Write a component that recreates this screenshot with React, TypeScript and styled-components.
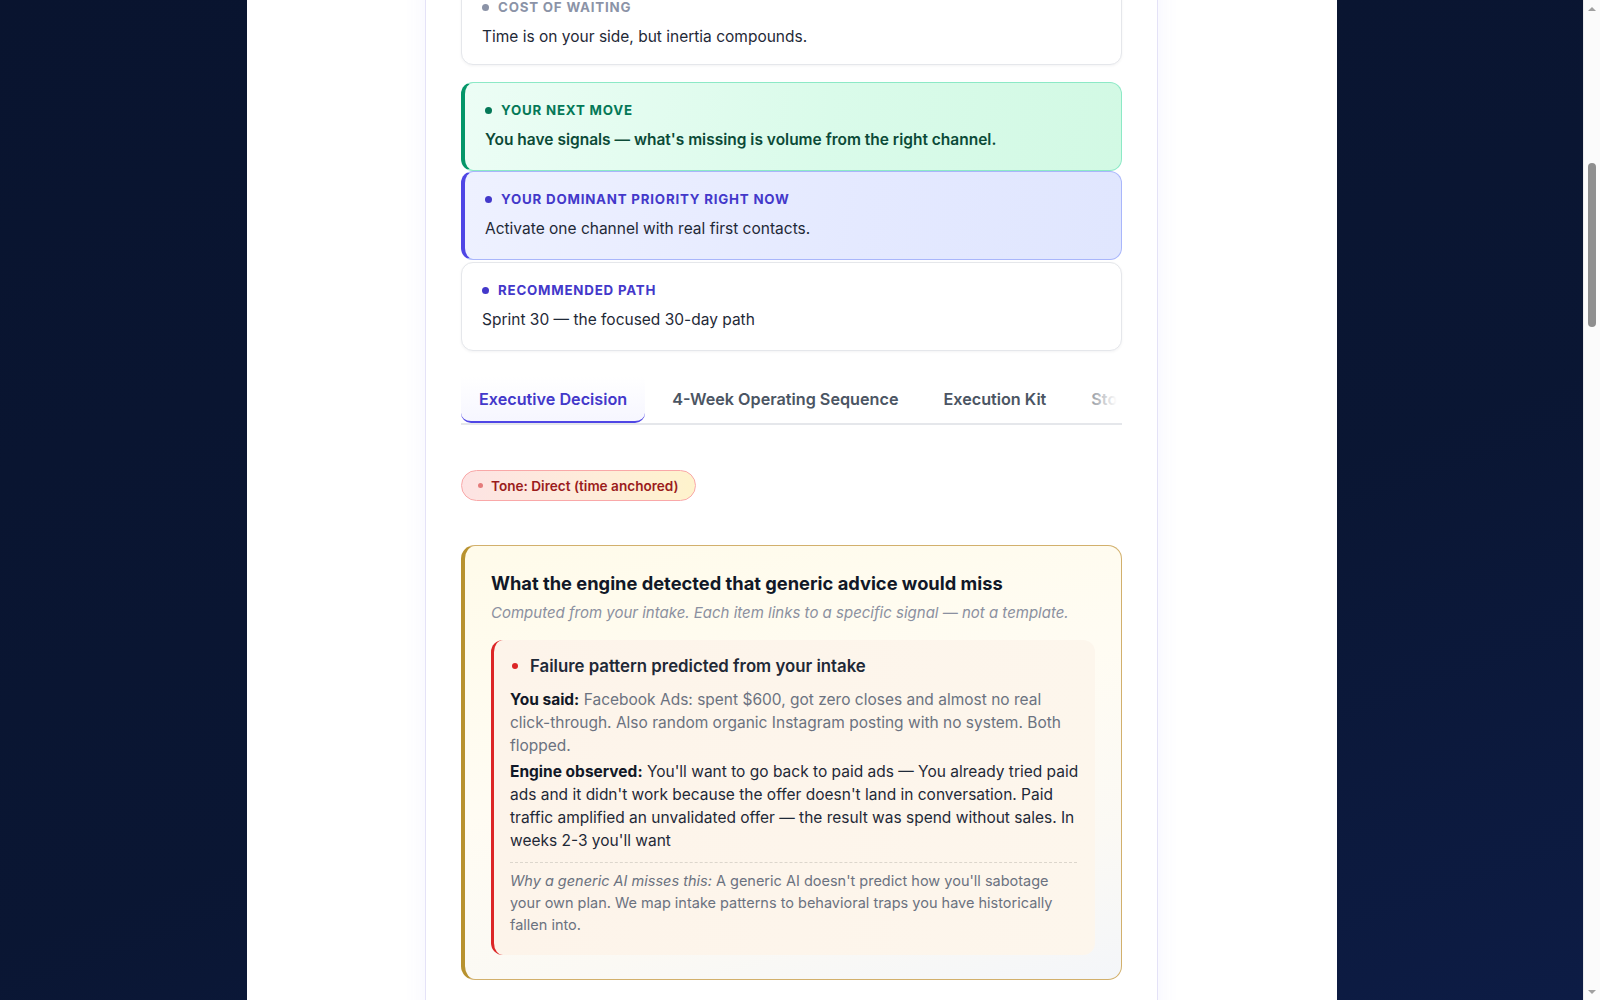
import React, { useLayoutEffect, useRef } from "react";
import styled, { createGlobalStyle, css } from "styled-components";

const GlobalStyle = createGlobalStyle`
    html, body {
        margin: 0;
        padding: 0;
    }
    body {
        padding-right: 17px;
        background: linear-gradient(160deg, #09142f 0%, #0a1633 60%, #0d1c45 100%) fixed;
        font-family: Inter, "Noto Sans", "Liberation Sans", sans-serif;
        color: #1f2937;
        -webkit-font-smoothing: antialiased;
    }
    * {
        box-sizing: border-box;
    }
`;

// window scrollbar, drawn because the headless window hides its own
const StyledScrollRail = styled.aside`
    position: fixed;
    top: 0;
    right: 0;
    bottom: 0;
    width: 17px;
    display: flex;
    flex-direction: column;
    align-items: center;
    background: #fbfbfb;
    border-left: 1px solid #ececec;
`;

const StyledRailArrow = styled.div<{ $down?: boolean }>`
    height: 17px;
    width: 100%;
    display: flex;
    align-items: center;
    justify-content: center;

    &::before {
        content: "";
        border-left: 4px solid transparent;
        border-right: 4px solid transparent;
        ${(p) => (p.$down ? "border-top: 4px solid #a0a0a0;" : "border-bottom: 4px solid #a0a0a0;")}
    }
`;

const StyledRailTrack = styled.div`
    flex: 1;
    width: 100%;
    display: flex;
    justify-content: center;
`;

const StyledRailThumb = styled.div`
    width: 8px;
    height: 164px;
    margin-top: 146px;
    border-radius: 5px;
    background: #8f8f8f;
`;

const StyledPage = styled.div`
    width: 1090px;
    margin: 0 auto;
    background: #ffffff;
    min-height: 6000px;
`;

const StyledPanel = styled.main`
    width: 733px;
    margin: 0 auto;
    min-height: 6000px;
    padding: 0 35px;
    border-left: 1px solid #e4e2f7;
    border-right: 1px solid #e4e2f7;
    box-shadow: 0 0 22px rgba(99, 102, 241, 0.07);
    background: #ffffff;
`;

// the report sections that sit above the visible area
const StyledEarlierSections = styled.section`
    height: 920px;
`;

type Tone = "plain" | "green" | "indigo";

const toneCard = {
    plain: css`
        background: #ffffff;
        border: 1px solid #e5e7eb;
        box-shadow: 0 1px 3px rgba(15, 23, 42, 0.05);
    `,
    green: css`
        background: linear-gradient(100deg, #ecfdf5 0%, #dafbea 55%, #d2f9e4 100%);
        border: 1px solid #8ce9c6;
        border-left: 4px solid #059669;
        padding-left: 20px;
    `,
    indigo: css`
        background: linear-gradient(100deg, #eef1ff 0%, #e4e9ff 60%, #e0e6fe 100%);
        border: 1px solid #a9b6fb;
        border-left: 4px solid #4f46e5;
        padding-left: 20px;
    `,
};

const StyledSignalCard = styled.div<{ $tone: Tone; $space: number; $tight?: boolean }>`
    border-radius: 12px;
    padding: 19px 20px ${(p) => (p.$tight ? 16 : 19)}px 20px;
    margin-top: ${(p) => p.$space}px;
    ${(p) => toneCard[p.$tone]}
`;

const StyledSignalLabel = styled.div<{ $color: string }>`
    display: flex;
    align-items: center;
    gap: 9px;
    height: 16px;
    font-size: 13.3px;
    font-weight: 700;
    letter-spacing: 0.06em;
    text-transform: uppercase;
    color: ${(p) => p.$color};

    &::before {
        content: "";
        width: 7px;
        height: 7px;
        border-radius: 50%;
        background: ${(p) => p.$color};
        flex-shrink: 0;
    }
`;

const StyledSignalText = styled.p<{ $strong?: boolean }>`
    margin: 10px 0 0;
    font-size: 15.5px;
    line-height: 23px;
    font-weight: ${(p) => (p.$strong ? 600 : 400)};
    color: ${(p) => (p.$strong ? "#0b4a37" : "#1f2937")};
`;

const StyledTabBar = styled.nav`
    position: relative;
    display: flex;
    gap: 9px;
    margin-top: 26px;
    border-bottom: 2px solid #e5e7eb;
    overflow: hidden;

    &::after {
        content: "";
        position: absolute;
        top: 0;
        right: 0;
        bottom: 0;
        width: 50px;
        background: linear-gradient(90deg, rgba(255, 255, 255, 0), #ffffff 90%);
        pointer-events: none;
    }
`;

const StyledTab = styled.button<{ $active?: boolean }>`
    flex-shrink: 0;
    padding: 11px 18px;
    border: none;
    border-bottom: 2px solid transparent;
    background: transparent;
    font-family: inherit;
    font-size: 16.2px;
    line-height: 22px;
    font-weight: 600;
    color: #4b5563;
    white-space: nowrap;
    cursor: pointer;

    ${(p) =>
        p.$active &&
        css`
            color: #4338ca;
            background: linear-gradient(180deg, #ffffff 0%, #f6f6ff 100%);
            border-bottom-color: #4f46e5;
            border-radius: 0 0 10px 10px;
        `}
`;

const StyledTonePill = styled.span`
    display: inline-flex;
    align-items: center;
    gap: 8px;
    margin-top: 45px;
    height: 31px;
    padding: 0 16px;
    border: 1px solid #f9a8a8;
    border-radius: 999px;
    background: linear-gradient(90deg, #fde3e3 0%, #feedd9 60%, #fef3cc 100%);
    font-size: 13.6px;
    font-weight: 600;
    color: #9b1c1c;

    &::before {
        content: "";
        width: 5px;
        height: 5px;
        border-radius: 50%;
        background: #e57b7b;
    }
`;

const StyledDetectionCard = styled.section`
    margin-top: 44px;
    padding: 24px 26px 24px 26px;
    border: 1.5px solid #d2b06c;
    border-left: 4px solid #b8922f;
    border-radius: 14px;
    background: linear-gradient(165deg, #fffbea 0%, #fffcf3 45%, #fbf9f4 75%, #f4f6f9 100%);
`;

const StyledDetectionTitle = styled.h3`
    margin: 0;
    font-size: 18.3px;
    line-height: 26px;
    font-weight: 700;
    color: #111827;
`;

const StyledDetectionSub = styled.p`
    margin: 6px 0 0;
    font-size: 15px;
    line-height: 22px;
    font-style: italic;
    color: #8b90a0;
`;

const StyledFinding = styled.article`
    margin-top: 16px;
    padding: 14px 13px 19px 16px;
    border-left: 3px solid #dc2626;
    border-radius: 12px;
    background: linear-gradient(90deg, #fdf4ea 0%, #fdf6ec 100%);
`;

const StyledFindingHead = styled.h4`
    display: flex;
    align-items: center;
    gap: 12px;
    margin: 0;
    padding-left: 2px;
    font-size: 16.8px;
    line-height: 24px;
    font-weight: 600;
    color: #1f2937;

    &::before {
        content: "";
        width: 6px;
        height: 6px;
        border-radius: 50%;
        background: #dc2626;
    }
`;

const StyledFindingLine = styled.p<{ $muted?: boolean; $first?: boolean }>`
    margin: ${(p) => (p.$first ? "10px" : "3px")} 0 0;
    font-size: 15.5px;
    line-height: 23px;
    color: ${(p) => (p.$muted ? "#6b7280" : "#1f2937")};

    b {
        font-weight: 700;
        color: #111827;
    }
`;

const StyledWhy = styled.p`
    margin: 10px 5px 0 0;
    padding-top: 7px;
    border-top: 1px dashed #dcd6cc;
    font-size: 14.5px;
    line-height: 22px;
    color: #6b7280;

    em {
        font-style: italic;
    }
`;

const signals: {
    label: string;
    text: string;
    tone: Tone;
    color: string;
    space: number;
    strong?: boolean;
    tight?: boolean;
}[] = [
    {
        label: "Cost of waiting",
        text: "Time is on your side, but inertia compounds.",
        tone: "plain",
        color: "#8b93a7",
        space: 0,
        tight: true,
    },
    {
        label: "Your next move",
        text: "You have signals — what's missing is volume from the right channel.",
        tone: "green",
        color: "#047857",
        space: 17,
        strong: true,
    },
    {
        label: "Your dominant priority right now",
        text: "Activate one channel with real first contacts.",
        tone: "indigo",
        color: "#4338ca",
        space: 0,
    },
    {
        label: "Recommended path",
        text: "Sprint 30 — the focused 30-day path",
        tone: "plain",
        color: "#4338ca",
        space: 2,
    },
];

const tabs = ["Executive Decision", "4-Week Operating Sequence", "Execution Kit", "Stop Doing", "Scorecard"];

const App: React.FC = () => {
    const firstCard = useRef<HTMLDivElement>(null);

    useLayoutEffect(() => {
        const el = firstCard.current;
        if (!el) return;
        window.scrollTo(0, el.getBoundingClientRect().top + window.scrollY + 21);
    }, []);

    return (
        <>
            <GlobalStyle />
            <StyledPage>
                <StyledPanel>
                    <StyledEarlierSections />

                    {signals.map((s, i) => (
                        <StyledSignalCard
                            key={s.label}
                            ref={i === 0 ? firstCard : undefined}
                            $tone={s.tone}
                            $space={s.space}
                            $tight={s.tight}
                        >
                            <StyledSignalLabel $color={s.color}>{s.label}</StyledSignalLabel>
                            <StyledSignalText $strong={s.strong}>{s.text}</StyledSignalText>
                        </StyledSignalCard>
                    ))}

                    <StyledTabBar>
                        {tabs.map((t, i) => (
                            <StyledTab key={t} $active={i === 0}>
                                {t}
                            </StyledTab>
                        ))}
                    </StyledTabBar>

                    <StyledTonePill>Tone: Direct (time anchored)</StyledTonePill>

                    <StyledDetectionCard>
                        <StyledDetectionTitle>What the engine detected that generic advice would miss</StyledDetectionTitle>
                        <StyledDetectionSub>
                            Computed from your intake. Each item links to a specific signal — not a template.
                        </StyledDetectionSub>

                        <StyledFinding>
                            <StyledFindingHead>Failure pattern predicted from your intake</StyledFindingHead>
                            <StyledFindingLine $muted $first>
                                <b>You said:</b> Facebook Ads: spent $600, got zero closes and almost no real
                                click-through. Also random organic Instagram posting with no system. Both flopped.
                            </StyledFindingLine>
                            <StyledFindingLine>
                                <b>Engine observed:</b> You'll want to go back to paid ads — You already tried paid ads
                                and it didn't work because the offer doesn't land in conversation. Paid traffic
                                amplified an unvalidated offer — the result was spend without sales. In weeks 2-3
                                you'll want
                            </StyledFindingLine>
                            <StyledWhy>
                                <em>Why a generic AI misses this:</em> A generic AI doesn't predict how you'll sabotage
                                your own plan. We map intake patterns to behavioral traps you have historically fallen
                                into.
                            </StyledWhy>
                        </StyledFinding>
                    </StyledDetectionCard>
                </StyledPanel>
            </StyledPage>
            <StyledScrollRail aria-hidden>
                <StyledRailArrow />
                <StyledRailTrack>
                    <StyledRailThumb />
                </StyledRailTrack>
                <StyledRailArrow $down />
            </StyledScrollRail>
        </>
    );
};

export default App;
